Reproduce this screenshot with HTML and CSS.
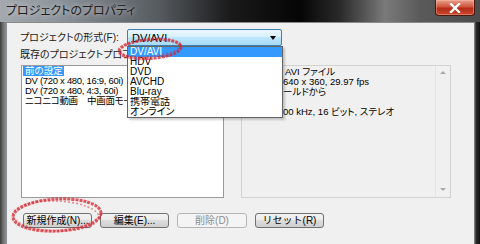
FILE: index.html
```html
<!DOCTYPE html>
<html lang="ja">
<head>
    <meta charset="UTF-8">
    <title>プロジェクトのプロパティ</title>
<link rel="stylesheet" href="styles.css">
</head>
<body>
    <div class="window">
        <div class="titlebar">
            <span class="title">プロジェクトのプロパティ</span>
            <span class="close">
                <svg width="12" height="10" viewBox="0 0 12 10"><path d="M2 1 L10 9 M10 1 L2 9" stroke="#fff" stroke-width="2.4" stroke-linecap="square"/></svg>
            </span>
        </div>
        <div class="client">
            <div class="format-row">
                <span class="label">プロジェクトの形式(F):</span>
                <div class="combo">
                    <span class="combo-value">DV/AVI</span>
                    <span class="combo-arrow"></span>
                    <ul class="droplist">
                        <li class="selected">DV/AVI</li>
                        <li>HDV</li>
                        <li>DVD</li>
                        <li>AVCHD</li>
                        <li>Blu-ray</li>
                        <li>携帯電話</li>
                        <li>オンライン</li>
                    </ul>
                </div>
            </div>
            <div class="label profile-label">既存のプロジェクトプロファイル</div>
            <div class="panels">
                <ul class="listbox">
                    <li class="selected">前の設定</li>
                    <li>DV (720 x 480, 16:9, 60i)</li>
                    <li>DV (720 x 480, 4:3, 60i)</li>
                    <li>ニコニコ動画　中画面モード</li>
                </ul>
                <div class="info">
                    <div class="info-text">
                        <div class="first">AVI ファイル</div>
                        <div>640 x 360, 29.97 fps</div>
                        <div>ールドから</div>
                        <div>&nbsp;</div>
                        <div>00 kHz, 16 ビット, ステレオ</div>
                    </div>
                    <div class="vscroll">
                        <span class="arr up"></span>
                        <span class="arr down"></span>
                    </div>
                </div>
            </div>
            <div class="buttons">
                <button class="btn">新規作成(N)...</button>
                <button class="btn">編集(E)...</button>
                <button class="btn" disabled>削除(D)</button>
                <button class="btn">リセット(R)</button>
            </div>
        </div>
        <svg class="marks" width="480" height="244" viewBox="0 0 480 244">
            <ellipse cx="150" cy="49" rx="31" ry="9.5" transform="rotate(-4 150 49)"/>
            <ellipse cx="151" cy="48" rx="30" ry="8.5" transform="rotate(-6 150 49)" class="thin"/>
            <ellipse cx="57" cy="215" rx="44" ry="16" transform="rotate(-3 57 215)"/>
            <ellipse cx="56" cy="216" rx="43" ry="15" transform="rotate(2 57 215)" class="thin"/>
        </svg>
    </div>
</body>
</html>
```

FILE: styles.css
```css
body {
    margin: 0;
    background: #2a2a2a;
}
.window {
    position: relative;
    width: 480px;
    height: 244px;
    overflow: hidden;
    font-family: "Liberation Sans", "Noto Sans CJK JP", sans-serif;
    font-feature-settings: "palt";
    background: linear-gradient(90deg, #3a3a3a 0, #6d6d6d 3px, #8b8f94 6px, #8b8f94 7px, #f0f0f0 7px, #f0f0f0 474px, #9a9a9a 474px, #2c2c2c 476px, #111 480px);
}
.titlebar {
    display: flex;
    align-items: flex-start;
    height: 22px;
    background: linear-gradient(90deg, #a3a9af 0, #8c939a 60px, #555a5f 160px, #1a1a1a 230px, #050505 300px, #2a2a2a 340px, #7a7a7a 385px, #5a5a5a 420px, #4c4c4c 480px);
}
.title {
    margin: 3px 0 0 6px;
    font-size: 12px;
    line-height: 16px;
    color: #202020;
    text-shadow: 0 0 5px rgba(255, 255, 255, 0.7);
}
.close {
    display: flex;
    align-items: center;
    justify-content: center;
    width: 38px;
    height: 15px;
    margin: 0 5px 0 auto;
    border: 1px solid #4a1810;
    border-top: none;
    border-radius: 0 0 4px 4px;
    background: linear-gradient(#e9a08c, #d0553d 45%, #b52b18 55%, #c8492e);
    box-shadow: inset 0 0 0 1px rgba(255, 200, 180, 0.4);
}
.client {
    height: 221px;
    margin: 0 6px 0 7px;
    padding: 6px 0 0 13px;
    border-top: 1px solid #8a8a8a;
    background: #f0f0f0;
    box-sizing: border-box;
    font-size: 10px;
    color: #000;
}
.format-row {
    display: flex;
    align-items: center;
    height: 17px;
}
.label {
    width: 107px;
    line-height: 12px;
    color: #1a1a1a;
}
.combo {
    position: relative;
    display: flex;
    align-items: center;
    width: 155px;
    height: 17px;
    box-sizing: border-box;
    padding-left: 4px;
    border: 1px solid #3c7fb1;
    border-radius: 2px;
    background: linear-gradient(#eaf6fd, #d9f0fc 45%, #bee6fd 50%, #a7d9f5);
}
.combo-value {
    flex: 1;
    font-size: 11px;
    line-height: 12px;
}
.combo-arrow {
    width: 0;
    height: 0;
    margin-right: 5px;
    border-left: 3px solid transparent;
    border-right: 3px solid transparent;
    border-top: 4px solid #000;
}
.droplist {
    position: absolute;
    top: 16px;
    left: -1px;
    z-index: 2;
    width: 156px;
    margin: 0;
    padding: 0;
    list-style: none;
    border: 1px solid #646464;
    background: #fff;
    box-sizing: border-box;
    box-shadow: 2px 2px 2px rgba(0, 0, 0, 0.2);
}
.droplist li {
    height: 10px;
    padding-left: 2px;
    font-size: 10px;
    line-height: 10px;
    overflow: hidden;
}
.droplist li.selected {
    background: #3399ff;
    color: #fff;
}
.profile-label {
    width: auto;
    margin-top: 3px;
}
.panels {
    display: flex;
    gap: 17px;
    height: 133px;
    margin: 4px 0 0 1px;
    font-size: 9.5px;
}
.listbox {
    width: 203px;
    margin: 0;
    padding: 0 0 0 1px;
    list-style: none;
    border: 1px solid #9a9a9a;
    background: #fff;
    box-sizing: border-box;
    letter-spacing: -0.3px;
}
.listbox li {
    width: fit-content;
    padding: 0 1px 0 2px;
    line-height: 10px;
    white-space: nowrap;
}
.listbox li.selected {
    background: #3399ff;
    color: #fff;
    letter-spacing: 0;
}
.info {
    display: flex;
    width: 210px;
    border: 1px solid #d2d2d2;
    box-sizing: border-box;
}
.info-text {
    flex: 1;
    padding: 1px 0 0 41px;
    line-height: 10px;
    white-space: nowrap;
}
.info-text .first {
    padding-left: 2px;
}
.vscroll {
    display: flex;
    flex-direction: column;
    justify-content: space-between;
    align-items: center;
    width: 14px;
    padding: 5px 0 6px;
    border-left: 1px solid #e4e4e4;
}
.arr {
    width: 0;
    height: 0;
    border-left: 3px solid transparent;
    border-right: 3px solid transparent;
}
.arr.up {
    border-bottom: 3px solid #a8a8a8;
}
.arr.down {
    border-top: 3px solid #a8a8a8;
}
.buttons {
    display: flex;
    gap: 8px;
    margin: 15px 0 0 3px;
}
.btn {
    width: 69px;
    height: 15px;
    padding: 0;
    font-family: inherit;
    font-size: 10px;
    line-height: 12px;
    color: #000;
    border: 1px solid #707070;
    border-radius: 3px;
    background: linear-gradient(#f2f2f2, #ebebeb 45%, #dddddd 50%, #cfcfcf);
}
.btn:disabled {
    width: 70px;
    color: #8d8d8d;
    border-color: #b5b5b5;
    background: #f4f4f4;
}
.marks {
    position: absolute;
    top: 0;
    left: 0;
    z-index: 3;
    pointer-events: none;
}
.marks ellipse {
    fill: none;
    stroke: #d9232e;
    stroke-width: 3;
    stroke-dasharray: 3 1;
    opacity: 0.75;
}
.marks ellipse.thin {
    stroke-width: 1.5;
    stroke-dasharray: 2 2;
    opacity: 0.5;
}
```
